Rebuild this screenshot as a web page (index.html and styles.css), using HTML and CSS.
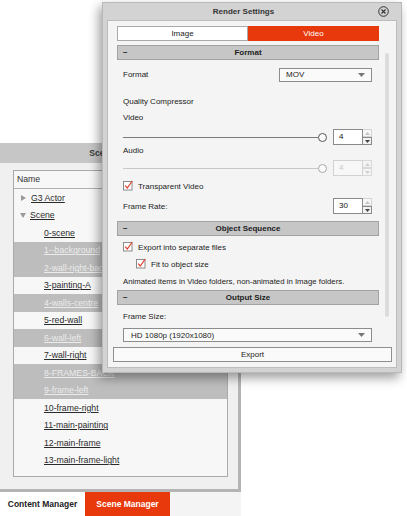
FILE: index.html
```html
<!DOCTYPE html>
<html>
<head>
<meta charset="utf-8">
<title>Render Settings</title>
<link rel="stylesheet" href="styles.css">
</head>
<body>
<div class="desk">
  <section class="scene-panel">
    <div class="panel-head">Scene Manager</div>
    <div class="panel-body">
      <div class="list">
        <div class="list-head">Name</div>
        <div class="row"><span class="tri tri-right"></span><span class="lnk">G3 Actor</span></div>
        <div class="row"><span class="tri tri-down"></span><span class="lnk">Scene</span></div>
        <div class="row child"><span class="lnk">0-scene</span></div>
        <div class="row child sel"><span class="lnk">1--background</span></div>
        <div class="row child sel"><span class="lnk">2-wall-right-back</span></div>
        <div class="row child"><span class="lnk">3-painting-A</span></div>
        <div class="row child sel"><span class="lnk">4-walls-centre</span></div>
        <div class="row child"><span class="lnk">5-red-wall</span></div>
        <div class="row child sel"><span class="lnk">6-wall-left</span></div>
        <div class="row child"><span class="lnk">7-wall-right</span></div>
        <div class="row child sel"><span class="lnk">8-FRAMES-BACK</span></div>
        <div class="row child sel"><span class="lnk">9-frame-left</span></div>
        <div class="row child"><span class="lnk">10-frame-right</span></div>
        <div class="row child"><span class="lnk">11-main-painting</span></div>
        <div class="row child"><span class="lnk">12-main-frame</span></div>
        <div class="row child"><span class="lnk">13-main-frame-light</span></div>
      </div>
    </div>
    <div class="bottom-tabs">
      <div class="btab">Content Manager</div>
      <div class="btab active">Scene Manager</div>
    </div>
  </section>

  <section class="render-win">
    <div class="titlebar">
      <div class="title">Render Settings</div>
      <svg class="close" width="11" height="11" viewBox="0 0 11 11">
        <circle cx="5.5" cy="5.5" r="4.8" fill="none" stroke="#333" stroke-width="1"/>
        <path d="M3.5 3.5 L7.5 7.5 M7.5 3.5 L3.5 7.5" stroke="#333" stroke-width="1.1"/>
      </svg>
    </div>
    <div class="inner">
      <div class="scroll">
        <div class="col">
          <div class="tabs">
            <div class="tab">Image</div>
            <div class="tab on">Video</div>
          </div>

          <div class="sec sec-format"><span class="minus">−</span><span class="sec-label">Format</span></div>
          <div class="line format-row">
            <span class="lbl">Format</span>
            <div class="drop drop-small"><span>MOV</span>
              <svg width="7" height="4" viewBox="0 0 7 4"><path d="M0 0 H7 L3.5 4 Z" fill="#777"/></svg>
            </div>
          </div>
          <div class="line l16 mt4"><span class="lbl">Quality Compressor</span></div>
          <div class="line l16"><span class="lbl">Video</span></div>
          <div class="line l16 mt4 slide-row">
            <div class="slider"><div class="track"></div><div class="knob"></div></div>
            <div class="spin">
              <div class="field">4</div>
              <div class="arrows">
                <div class="arr up"><svg width="5" height="3" viewBox="0 0 5 3"><path d="M0 3 H5 L2.5 0 Z" fill="#c4c4c4"/></svg></div>
                <div class="arr down"><svg width="5" height="3" viewBox="0 0 5 3"><path d="M0 0 H5 L2.5 3 Z" fill="#444"/></svg></div>
              </div>
            </div>
          </div>
          <div class="line l11"><span class="lbl">Audio</span></div>
          <div class="line l16 mt4 slide-row dis">
            <div class="slider"><div class="track"></div><div class="knob"></div></div>
            <div class="spin">
              <div class="field">4</div>
              <div class="arrows">
                <div class="arr up"><svg width="5" height="3" viewBox="0 0 5 3"><path d="M0 3 H5 L2.5 0 Z" fill="#d0d0d0"/></svg></div>
                <div class="arr down"><svg width="5" height="3" viewBox="0 0 5 3"><path d="M0 0 H5 L2.5 3 Z" fill="#d0d0d0"/></svg></div>
              </div>
            </div>
          </div>
          <div class="line l16 mt2 check">
            <svg class="cb" width="10" height="11" viewBox="0 0 10 11"><rect x="0.5" y="1.5" width="8.5" height="8.5" fill="#fff" stroke="#8a8a8a"/><path d="M2.2 5.6 L4.3 8 L9.2 1" fill="none" stroke="#e0402c" stroke-width="1.2"/></svg>
            <span class="lbl">Transparent Video</span>
          </div>
          <div class="line l16 mt4 rate-row">
            <span class="lbl">Frame Rate:</span>
            <div class="spin">
              <div class="field">30</div>
              <div class="arrows">
                <div class="arr up"><svg width="5" height="3" viewBox="0 0 5 3"><path d="M0 3 H5 L2.5 0 Z" fill="#c4c4c4"/></svg></div>
                <div class="arr down"><svg width="5" height="3" viewBox="0 0 5 3"><path d="M0 0 H5 L2.5 3 Z" fill="#444"/></svg></div>
              </div>
            </div>
          </div>

          <div class="sec sec-obj"><span class="minus">−</span><span class="sec-label">Object Sequence</span></div>
          <div class="line l16 mt3 check">
            <svg class="cb" width="10" height="11" viewBox="0 0 10 11"><rect x="0.5" y="1.5" width="8.5" height="8.5" fill="#fff" stroke="#8a8a8a"/><path d="M2.2 5.6 L4.3 8 L9.2 1" fill="none" stroke="#e0402c" stroke-width="1.2"/></svg>
            <span class="lbl">Export into separate files</span>
          </div>
          <div class="line l16 mt1 check sub">
            <svg class="cb" width="10" height="11" viewBox="0 0 10 11"><rect x="0.5" y="1.5" width="8.5" height="8.5" fill="#fff" stroke="#8a8a8a"/><path d="M2.2 5.6 L4.3 8 L9.2 1" fill="none" stroke="#e0402c" stroke-width="1.2"/></svg>
            <span class="lbl">Fit to object size</span>
          </div>
          <div class="line l16 mt1"><span class="lbl note">Animated items in Video folders, non-animated in Image folders.</span></div>

          <div class="sec sec-out"><span class="minus">−</span><span class="sec-label">Output Size</span></div>
          <div class="line l16 mt3"><span class="lbl">Frame Size:</span></div>
          <div class="drop drop-wide"><span>HD 1080p (1920x1080)</span>
            <svg width="7" height="4" viewBox="0 0 7 4"><path d="M0 0 H7 L3.5 4 Z" fill="#777"/></svg>
          </div>
        </div>
        <div class="vscroll"></div>
      </div>
      <div class="footer">
        <div class="export">Export</div>
      </div>
    </div>
  </section>
</div>
</body>
</html>
```

FILE: styles.css
```css
* { box-sizing: border-box; }
html, body { margin: 0; padding: 0; }
body {
  width: 407px;
  height: 516px;
  overflow: hidden;
  background: #ffffff;
  font-family: "Liberation Sans", Arial, sans-serif;
  font-size: 8px;
  color: #222;
}
.desk {
  position: relative;
  width: 407px;
  height: 516px;
  display: flex;
  flex-direction: column;
}

/* ---------- Scene manager panel ---------- */
.scene-panel {
  width: 241px;
  margin-top: 143px;
  display: flex;
  flex-direction: column;
}
.panel-head {
  height: 20px;
  background: #c6c6c6;
  text-align: center;
  line-height: 20px;
  font-size: 8.5px;
  font-weight: bold;
  color: #3a3a3a;
}
.panel-body {
  height: 329px;
  background: #f0f0f0;
  border-right: 3px solid #b4b4b4;
  border-bottom: 3px solid #b4b4b4;
  padding: 7px 10px 0 13px;
}
.list {
  height: 307px;
  background: #f7f7f7;
  border: 1px solid #a9a9a9;
}
.list-head {
  height: 18px;
  border-bottom: 1px solid #b0b0b0;
  padding-left: 3px;
  line-height: 16px;
  font-size: 8.7px;
  color: #333;
}
.row {
  height: 17.5px;
  display: flex;
  align-items: center;
  padding-left: 6px;
  font-size: 8.7px;
}
.row.child { padding-left: 30px; }
.row.sel { background: #bdbdbd; }
.lnk { color: #2b2b2b; text-decoration: underline; text-underline-offset: 1px; }
.row.sel .lnk { color: #ececec; }
.tri { display: inline-block; }
.tri-right {
  width: 0; height: 0;
  border-top: 3.5px solid transparent;
  border-bottom: 3.5px solid transparent;
  border-left: 5px solid #9a9a9a;
  margin: 0 5px 0 1px;
}
.tri-down {
  width: 0; height: 0;
  border-left: 3.5px solid transparent;
  border-right: 3.5px solid transparent;
  border-top: 5px solid #9a9a9a;
  margin: 0 4px 0 0;
}
.bottom-tabs {
  height: 24px;
  background: #f4f4f4;
  display: flex;
  width: 241px;
}
.btab {
  width: 85px;
  background: #ffffff;
  font-weight: bold;
  font-size: 8.5px;
  color: #222;
  display: flex;
  align-items: center;
  justify-content: center;
}
.btab.active { background: #e8390d; color: #ffffff; }

/* ---------- Render settings window ---------- */
.render-win {
  position: absolute;
  left: 102px;
  top: 2px;
  width: 300px;
  height: 371px;
  background: #d3d3d3;
  border: 1px solid #b9b9b9;
  box-shadow: -3px 5px 10px rgba(0, 0, 0, 0.38);
  display: flex;
  flex-direction: column;
}
.titlebar {
  height: 17px;
  display: flex;
  align-items: center;
}
.title {
  flex: 1;
  text-align: center;
  padding-left: 6px;
  font-weight: bold;
  font-size: 8px;
  color: #333;
}
.close { margin-right: 12px; }
.inner {
  flex: 1;
  margin: 0 4px 4px 4px;
  background: #f4f4f4;
  border: 1px solid #bcbcbc;
  display: flex;
  flex-direction: column;
}
.scroll {
  display: flex;
  padding-left: 9px;
}
.col {
  width: 262px;
  display: flex;
  flex-direction: column;
}
.vscroll {
  width: 4px;
  height: 264px;
  margin-top: 32px;
  margin-left: 6px;
  background: #dcdcdc;
  border-radius: 2px;
}
.tabs {
  margin-top: 5px;
  height: 15px;
  display: flex;
}
.tab {
  flex: 1;
  display: flex;
  align-items: center;
  justify-content: center;
  background: #ffffff;
  border: 1px solid #a9a9a9;
  color: #222;
}
.tab.on { background: #e8390d; border-color: #e8390d; color: #fff; }

.sec {
  height: 15px;
  background: #c6c6c6;
  border: 1px solid #a2a2a2;
  position: relative;
  display: flex;
  align-items: center;
  justify-content: center;
}
.sec-format { margin-top: 4px; }
.sec-obj { margin-top: 7px; }
.sec-out { margin-top: 1px; }
.minus {
  position: absolute;
  left: 5px;
  top: 0;
  line-height: 13px;
  font-weight: bold;
  color: #333;
}
.sec-label { font-weight: bold; color: #222; }

.line {
  display: flex;
  align-items: center;
  padding-left: 6px;
  padding-right: 7px;
}
.l16 { height: 16px; }
.l11 { height: 11px; }
.mt1 { margin-top: 1px; }
.mt2 { margin-top: 2px; }
.mt3 { margin-top: 3px; }
.mt4 { margin-top: 4px; }
.lbl { color: #222; }
.note { font-size: 7.8px; }

.format-row { height: 29px; justify-content: space-between; }
.drop {
  height: 14px;
  background: #fafafa;
  border: 1px solid #8c8c8c;
  display: flex;
  align-items: center;
  justify-content: space-between;
  padding: 0 6px 0 6px;
  color: #222;
}
.drop-small { width: 93px; }
.drop-wide {
  margin: 4px 7px 0 6px;
  padding-left: 7px;
}

.slide-row { justify-content: space-between; }
.slider {
  width: 204px;
  display: flex;
  align-items: center;
}
.track { flex: 1; height: 1px; background: #7a7a7a; }
.knob {
  width: 9px;
  height: 9px;
  border-radius: 50%;
  border: 1px solid #555;
  background: #fafafa;
}
.spin { display: flex; height: 16px; width: 39px; }
.field {
  width: 30px;
  height: 16px;
  background: #fff;
  border: 1px solid #8a8a8a;
  padding-left: 5px;
  line-height: 14px;
  color: #111;
}
.arrows { width: 9px; display: flex; flex-direction: column; }
.arr {
  height: 8px;
  display: flex;
  align-items: center;
  justify-content: center;
  border: 1px solid #d4d4d4;
  border-left: none;
  background: #f7f7f7;
}
.arr.down { border: 1px solid #8a8a8a; border-left: none; background: #f2f2f2; }
.dis .track { background: #c8c8c8; }
.dis .knob { border-color: #a8a8a8; }
.dis .field { border-color: #d2d2d2; color: #c8c8c8; background: #f7f7f7; }
.dis .arr, .dis .arr.down { border-color: #d8d8d8; background: #f4f4f4; }
.rate-row { justify-content: space-between; }

.check .cb { margin-right: 5px; margin-top: -2px; }
.check.sub { padding-left: 19px; }

.footer { padding: 5px 4px 0 5px; }
.export {
  height: 15px;
  background: #fafafa;
  border: 1px solid #8e8e8e;
  display: flex;
  align-items: center;
  justify-content: center;
  color: #222;
}
```
